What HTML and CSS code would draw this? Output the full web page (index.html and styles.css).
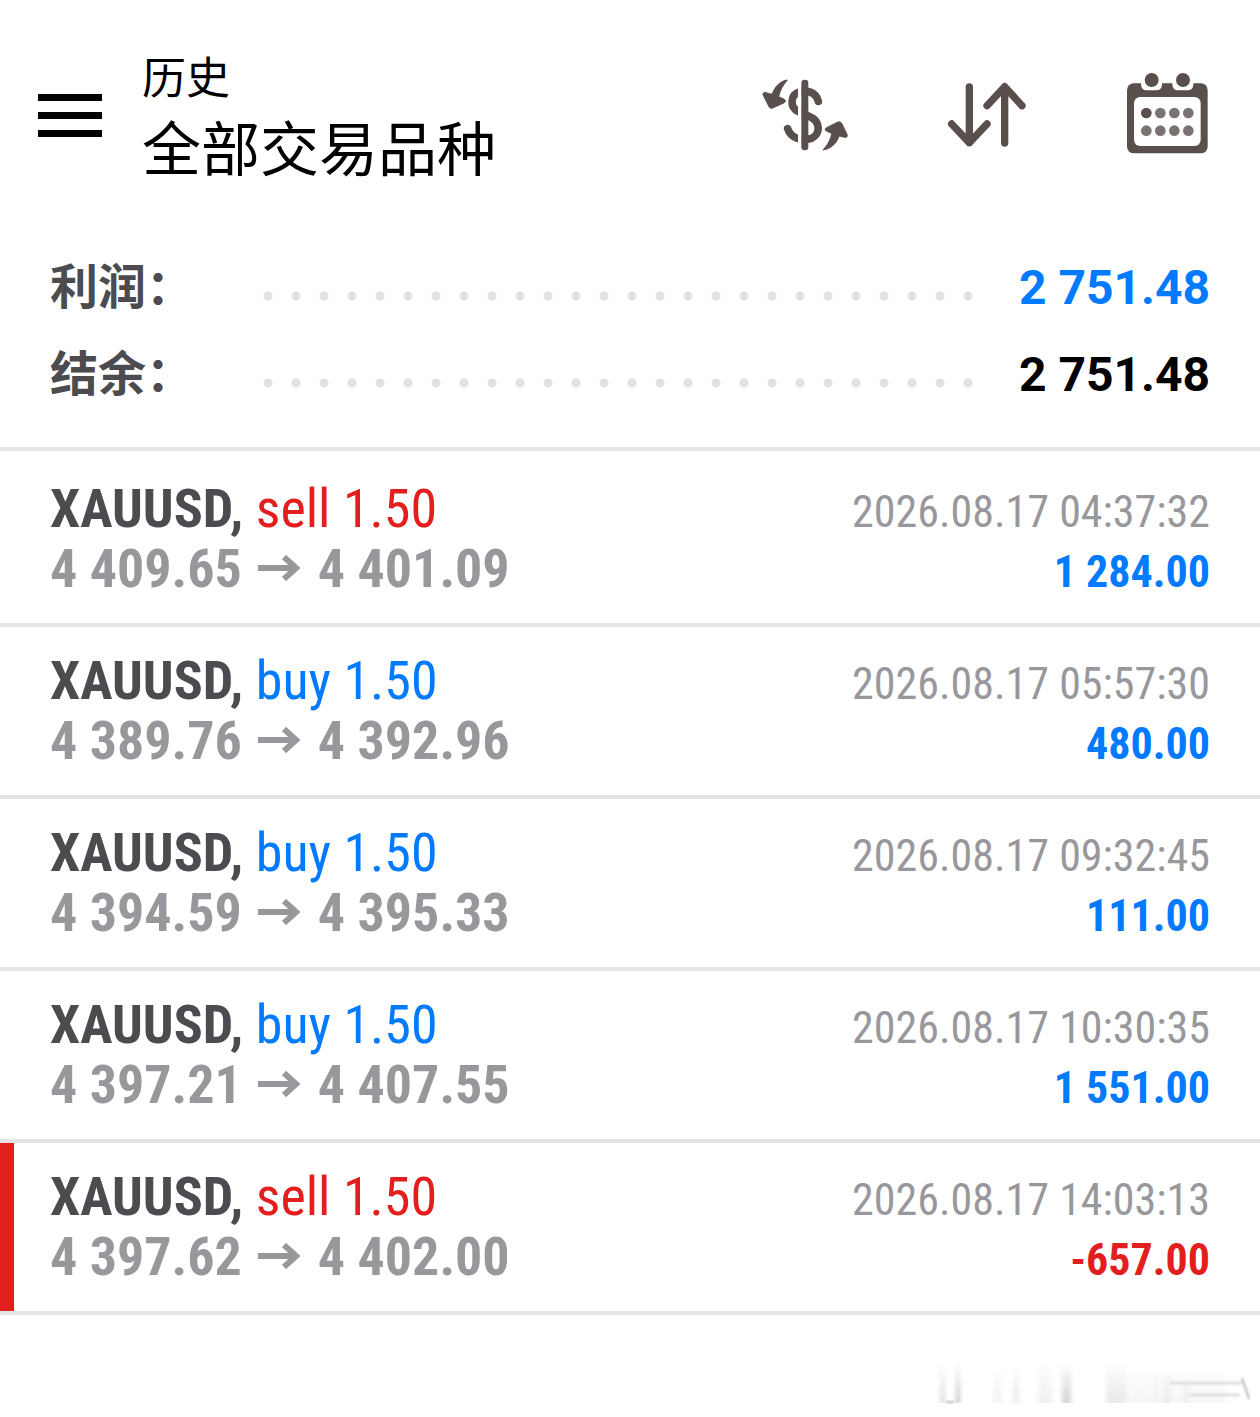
FILE: index.html
```html
<!DOCTYPE html>
<html lang="zh-CN">
<head>
    <meta charset="UTF-8">
    <meta name="viewport" content="width=device-width, initial-scale=1.0">
    <title>历史</title>
    <link rel="stylesheet" href="styles.css">
</head>
<body>

<header>
    <button class="menu" aria-label="菜单"><span></span><span></span><span></span></button>
    <div class="title">
        <p>历史</p>
        <h1>全部交易品种</h1>
    </div>
    <div class="actions">
        <button aria-label="货币">
            <svg viewBox="0 0 330 330">
                <path class="line" stroke-width="23" d="M205 124C198 96 172 90 150 95C120 104 118 142 146 155L180 170C212 184 212 224 184 235C154 245 122 234 113 206"/>
                <rect class="gap" x="144" y="56" width="11" height="220"/>
                <rect x="154" y="59" width="21" height="212" rx="10"/>
                <g class="swap">
                    <path d="M112 60C94 62 76 76 66 103L48 98C40 97 36 101 41 108L57 140C60 145 65 146 70 143L103 128C109 124 106 118 99 116L86 110C90 92 98 76 112 60Z"/>
                    <path d="M219 270C234 254 242 238 245 220L231 214C224 211 224 206 230 203L262 187C268 184 273 186 276 192L291 223C294 229 290 233 284 232L267 228C260 250 244 266 219 270Z"/>
                </g>
            </svg>
        </button>
        <button aria-label="排序">
            <svg viewBox="0 0 330 330">
                <path class="line" stroke-width="22" d="M118 81V248M65 192L118 248L171 192M224 249V81M171 137L224 80L276 137"/>
            </svg>
        </button>
        <button aria-label="日期">
            <svg viewBox="0 0 330 330">
                <rect x="51" y="70" width="242" height="210" rx="20"/>
                <rect class="gap" x="72" y="111" width="200" height="147" rx="18"/>
                <path class="gap" d="M93 66H156V72Q156 91 138 91H111Q93 91 93 72ZM187 66H250V72Q250 91 232 91H205Q187 91 187 72Z"/>
                <circle cx="125" cy="60" r="21"/>
                <circle cx="219" cy="60" r="21"/>
                <circle cx="109" cy="159" r="16"/>
                <g class="days">
                    <circle cx="151" cy="159" r="16"/>
                    <circle cx="193" cy="159" r="16"/>
                    <circle cx="235" cy="159" r="16"/>
                    <circle cx="109" cy="212" r="16"/>
                    <circle cx="151" cy="212" r="16"/>
                    <circle cx="193" cy="212" r="16"/>
                    <circle cx="235" cy="212" r="16"/>
                </g>
            </svg>
        </button>
    </div>
</header>

<dl class="summary">
    <div>
        <dt>利润：</dt>
        <dd class="blue">2 751.48</dd>
    </div>
    <div>
        <dt>结余：</dt>
        <dd>2 751.48</dd>
    </div>
</dl>

<ul class="deals">
    <li>
        <div class="row">
            <h2>XAUUSD, <span class="red">sell 1.50</span></h2>
            <time>2026.08.17 04:37:32</time>
        </div>
        <div class="row">
            <p class="price">4 409.65 <svg viewBox="0 0 42 26"><path d="M0 13H38M26 2L38 13L26 24"/></svg> 4 401.09</p>
            <p class="profit blue">1 284.00</p>
        </div>
    </li>
    <li>
        <div class="row">
            <h2>XAUUSD, <span class="blue">buy 1.50</span></h2>
            <time>2026.08.17 05:57:30</time>
        </div>
        <div class="row">
            <p class="price">4 389.76 <svg viewBox="0 0 42 26"><path d="M0 13H38M26 2L38 13L26 24"/></svg> 4 392.96</p>
            <p class="profit blue">480.00</p>
        </div>
    </li>
    <li>
        <div class="row">
            <h2>XAUUSD, <span class="blue">buy 1.50</span></h2>
            <time>2026.08.17 09:32:45</time>
        </div>
        <div class="row">
            <p class="price">4 394.59 <svg viewBox="0 0 42 26"><path d="M0 13H38M26 2L38 13L26 24"/></svg> 4 395.33</p>
            <p class="profit blue">111.00</p>
        </div>
    </li>
    <li>
        <div class="row">
            <h2>XAUUSD, <span class="blue">buy 1.50</span></h2>
            <time>2026.08.17 10:30:35</time>
        </div>
        <div class="row">
            <p class="price">4 397.21 <svg viewBox="0 0 42 26"><path d="M0 13H38M26 2L38 13L26 24"/></svg> 4 407.55</p>
            <p class="profit blue">1 551.00</p>
        </div>
    </li>
    <li class="loss">
        <div class="row">
            <h2>XAUUSD, <span class="red">sell 1.50</span></h2>
            <time>2026.08.17 14:03:13</time>
        </div>
        <div class="row">
            <p class="price">4 397.62 <svg viewBox="0 0 42 26"><path d="M0 13H38M26 2L38 13L26 24"/></svg> 4 402.00</p>
            <p class="profit red">-657.00</p>
        </div>
    </li>
</ul>

<footer>
    <svg viewBox="0 0 340 67" aria-hidden="true">
        <defs>
            <linearGradient id="fade" x1="0" y1="0" x2="0" y2="1">
                <stop offset="0" stop-color="#fff"/>
                <stop offset="1" stop-color="#fff" stop-opacity="0"/>
            </linearGradient>
            <filter id="soft" x="-5%" width="110%"><feGaussianBlur stdDeviation="2 0"/></filter>
            <filter id="haze" x="-20%" y="-40%" width="140%" height="180%"><feGaussianBlur stdDeviation="1"/></filter>
        </defs>
        <g filter="url(#soft)">
            <rect x="20" y="14" width="5" height="39" fill="#e2e2e2"/>
            <rect x="36" y="14" width="4" height="39" fill="#c8c8c8"/>
            <rect x="74" y="14" width="8" height="39" fill="#f4f4f4"/>
            <rect x="93" y="14" width="6" height="39" fill="#ededed"/>
            <rect x="118" y="14" width="14" height="39" fill="#f1f1f1"/>
            <rect x="142" y="14" width="9" height="39" fill="#d8d8d8"/>
            <rect x="186" y="14" width="20" height="39" fill="#ebebeb"/>
            <rect x="206" y="22" width="100" height="31" fill="#f8f8f8"/>
            <rect x="233" y="22" width="5" height="31" fill="#f0f0f0"/>
            <rect x="244" y="22" width="6" height="31" fill="#ebebeb"/>
            <rect x="263" y="22" width="6" height="31" fill="#efefef"/>
        </g>
        <rect x="10" y="12" width="320" height="36" fill="url(#fade)"/>
        <g filter="url(#haze)" fill="none">
            <path d="M250 33H322M270 45H320" stroke="#dedede" stroke-width="3"/>
            <path d="M322 28L329 49" stroke="#b4b4b4" stroke-width="2"/>
            <path d="M26 52H34" stroke="#bbb" stroke-width="2"/>
        </g>
    </svg>
</footer>

</body>
</html>
```
FILE: styles.css
```css
* {
    margin: 0;
    padding: 0;
    box-sizing: border-box;
}

body {
    background-color: #fff;
    color: #000;
    font-family: Roboto, "Noto Sans CJK SC", sans-serif;
}

button {
    border: none;
    background: none;
    cursor: pointer;
}

.blue {
    color: #007aff;
}

.red {
    color: #e31e1e;
}

header {
    display: flex;
    align-items: center;
    padding: 43px 40px 39px 38px;
}

.menu {
    width: 64px;
    display: grid;
    gap: 11px;
}

.menu span {
    height: 7px;
    background-color: #000;
}

.title {
    flex: 1;
    margin-left: 40px;
    line-height: 72px;
}

.title p {
    font-size: 44px;
}

.title h1 {
    font-size: 59px;
    font-weight: 400;
}

.actions {
    display: flex;
    gap: 70px;
}

.actions svg {
    display: block;
    width: 110px;
    height: 110px;
    fill: #594f4d;
}

.actions .line {
    fill: none;
    stroke: #594f4d;
    stroke-linecap: round;
    stroke-linejoin: round;
}

.actions .swap {
    stroke: #594f4d;
    stroke-width: 3px;
    stroke-linejoin: round;
}

.actions .gap {
    fill: #fff;
}

.days {
    fill: #7b7371;
}

.summary {
    padding: 18px 50px 29px;
    border-bottom: 4px solid #e4e4e4;
    font-size: 48px;
    font-weight: 700;
    line-height: 87px;
}

.summary div {
    display: flex;
    align-items: center;
}

.summary dt {
    width: 204px;
    color: #4b4b50;
}

.summary dd {
    flex: 1;
    display: flex;
    align-items: center;
}

/* dotted leader between label and value */
.summary dd::before {
    content: "";
    flex: 1;
    height: 28px;
    margin: 16px 34px 0 0;
    background: radial-gradient(circle, #e2e2e2 4px, transparent 5px) 0 0 / 28px 28px repeat-x;
}

.deals {
    list-style: none;
    padding-top: 4px;
    font-family: "Roboto Condensed", Roboto, sans-serif;
    line-height: 60px;
}

.deals li {
    padding: 24px 50px;
    border-bottom: 4px solid #e4e4e4;
}

.deals .loss {
    background: linear-gradient(#e31e1e, #e31e1e) 0 0 / 14px 100% no-repeat;
}

.row {
    display: flex;
    justify-content: space-between;
    align-items: baseline;
    height: 60px;
}

.row h2,
.price {
    color: #4b4b50;
    font-size: 54px;
    font-weight: 700;
}

.row h2 span {
    font-weight: 400;
}

.row .price {
    color: #98989c;
}

.price svg {
    width: 42px;
    height: 26px;
    margin: 0 5px 6px 4px;
    fill: none;
    stroke: #98989c;
    stroke-width: 6px;
}

time,
.profit {
    font-size: 44px;
}

time {
    color: #98989c;
}

.profit {
    font-weight: 700;
}

footer {
    display: flex;
    justify-content: flex-end;
    padding-top: 35px;
}

footer svg {
    width: 340px;
    height: 67px;
}
```
